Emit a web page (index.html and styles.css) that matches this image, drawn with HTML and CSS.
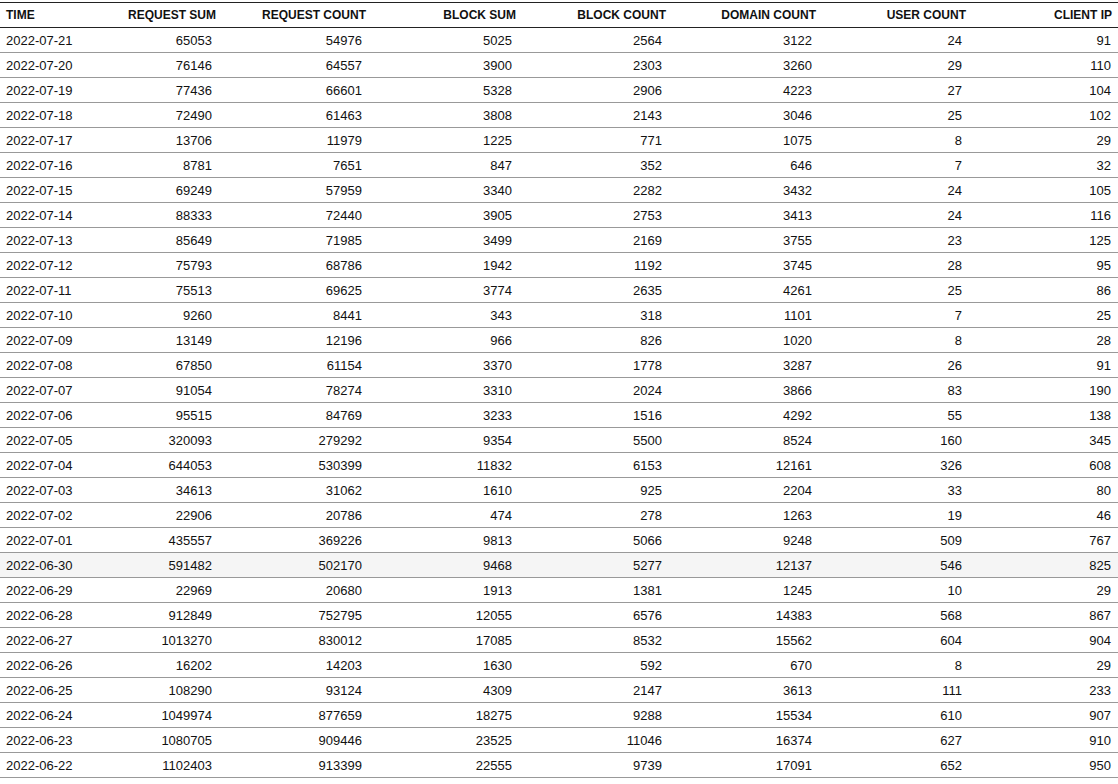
FILE: index.html
```html
<!DOCTYPE html>
<html>
<head>
<meta charset="utf-8">
<link rel="stylesheet" href="styles.css">
</head>
<body>
<table class="grid">
<colgroup><col class="c-time"><col class="c-num"><col class="c-num"><col class="c-num"><col class="c-num"><col class="c-num"><col class="c-num"><col class="c-last"></colgroup>
<thead>
<tr><th class="l">TIME</th><th>REQUEST SUM</th><th>REQUEST COUNT</th><th>BLOCK SUM</th><th>BLOCK COUNT</th><th>DOMAIN COUNT</th><th>USER COUNT</th><th class="last">CLIENT IP</th></tr>
</thead>
<tbody>
<tr><td class="l">2022-07-21</td><td>65053</td><td>54976</td><td>5025</td><td>2564</td><td>3122</td><td>24</td><td class="last">91</td></tr>
<tr><td class="l">2022-07-20</td><td>76146</td><td>64557</td><td>3900</td><td>2303</td><td>3260</td><td>29</td><td class="last">110</td></tr>
<tr><td class="l">2022-07-19</td><td>77436</td><td>66601</td><td>5328</td><td>2906</td><td>4223</td><td>27</td><td class="last">104</td></tr>
<tr><td class="l">2022-07-18</td><td>72490</td><td>61463</td><td>3808</td><td>2143</td><td>3046</td><td>25</td><td class="last">102</td></tr>
<tr><td class="l">2022-07-17</td><td>13706</td><td>11979</td><td>1225</td><td>771</td><td>1075</td><td>8</td><td class="last">29</td></tr>
<tr><td class="l">2022-07-16</td><td>8781</td><td>7651</td><td>847</td><td>352</td><td>646</td><td>7</td><td class="last">32</td></tr>
<tr><td class="l">2022-07-15</td><td>69249</td><td>57959</td><td>3340</td><td>2282</td><td>3432</td><td>24</td><td class="last">105</td></tr>
<tr><td class="l">2022-07-14</td><td>88333</td><td>72440</td><td>3905</td><td>2753</td><td>3413</td><td>24</td><td class="last">116</td></tr>
<tr><td class="l">2022-07-13</td><td>85649</td><td>71985</td><td>3499</td><td>2169</td><td>3755</td><td>23</td><td class="last">125</td></tr>
<tr><td class="l">2022-07-12</td><td>75793</td><td>68786</td><td>1942</td><td>1192</td><td>3745</td><td>28</td><td class="last">95</td></tr>
<tr><td class="l">2022-07-11</td><td>75513</td><td>69625</td><td>3774</td><td>2635</td><td>4261</td><td>25</td><td class="last">86</td></tr>
<tr><td class="l">2022-07-10</td><td>9260</td><td>8441</td><td>343</td><td>318</td><td>1101</td><td>7</td><td class="last">25</td></tr>
<tr><td class="l">2022-07-09</td><td>13149</td><td>12196</td><td>966</td><td>826</td><td>1020</td><td>8</td><td class="last">28</td></tr>
<tr><td class="l">2022-07-08</td><td>67850</td><td>61154</td><td>3370</td><td>1778</td><td>3287</td><td>26</td><td class="last">91</td></tr>
<tr><td class="l">2022-07-07</td><td>91054</td><td>78274</td><td>3310</td><td>2024</td><td>3866</td><td>83</td><td class="last">190</td></tr>
<tr><td class="l">2022-07-06</td><td>95515</td><td>84769</td><td>3233</td><td>1516</td><td>4292</td><td>55</td><td class="last">138</td></tr>
<tr><td class="l">2022-07-05</td><td>320093</td><td>279292</td><td>9354</td><td>5500</td><td>8524</td><td>160</td><td class="last">345</td></tr>
<tr><td class="l">2022-07-04</td><td>644053</td><td>530399</td><td>11832</td><td>6153</td><td>12161</td><td>326</td><td class="last">608</td></tr>
<tr><td class="l">2022-07-03</td><td>34613</td><td>31062</td><td>1610</td><td>925</td><td>2204</td><td>33</td><td class="last">80</td></tr>
<tr><td class="l">2022-07-02</td><td>22906</td><td>20786</td><td>474</td><td>278</td><td>1263</td><td>19</td><td class="last">46</td></tr>
<tr><td class="l">2022-07-01</td><td>435557</td><td>369226</td><td>9813</td><td>5066</td><td>9248</td><td>509</td><td class="last">767</td></tr>
<tr class="hover"><td class="l">2022-06-30</td><td>591482</td><td>502170</td><td>9468</td><td>5277</td><td>12137</td><td>546</td><td class="last">825</td></tr>
<tr><td class="l">2022-06-29</td><td>22969</td><td>20680</td><td>1913</td><td>1381</td><td>1245</td><td>10</td><td class="last">29</td></tr>
<tr><td class="l">2022-06-28</td><td>912849</td><td>752795</td><td>12055</td><td>6576</td><td>14383</td><td>568</td><td class="last">867</td></tr>
<tr><td class="l">2022-06-27</td><td>1013270</td><td>830012</td><td>17085</td><td>8532</td><td>15562</td><td>604</td><td class="last">904</td></tr>
<tr><td class="l">2022-06-26</td><td>16202</td><td>14203</td><td>1630</td><td>592</td><td>670</td><td>8</td><td class="last">29</td></tr>
<tr><td class="l">2022-06-25</td><td>108290</td><td>93124</td><td>4309</td><td>2147</td><td>3613</td><td>111</td><td class="last">233</td></tr>
<tr><td class="l">2022-06-24</td><td>1049974</td><td>877659</td><td>18275</td><td>9288</td><td>15534</td><td>610</td><td class="last">907</td></tr>
<tr><td class="l">2022-06-23</td><td>1080705</td><td>909446</td><td>23525</td><td>11046</td><td>16374</td><td>627</td><td class="last">910</td></tr>
<tr><td class="l">2022-06-22</td><td>1102403</td><td>913399</td><td>22555</td><td>9739</td><td>17091</td><td>652</td><td class="last">950</td></tr>
</tbody>
</table>
</body>
</html>
```
FILE: styles.css
```css
html, body {
  margin: 0;
  padding: 0;
  background: #fff;
}
body {
  padding-top: 2px;
  font-family: "Liberation Sans", Arial, sans-serif;
  color: #111;
}
.grid {
  width: 1118px;
  border-collapse: collapse;
  table-layout: fixed;
}
.c-time { width: 70px; }
.c-num { width: 150px; }
.c-last { width: 148px; }
.grid th {
  font-size: 12px;
  font-weight: bold;
  text-align: right;
  height: 24px;
  padding: 0 4px 0 6px;
  border-top: 1px solid #222;
  border-bottom: 1px solid #222;
  white-space: nowrap;
  color: #111;
}
.grid td {
  font-size: 13px;
  text-align: right;
  height: 24px;
  padding: 0 8px 0 6px;
  border-bottom: 1px solid #999;
  white-space: nowrap;
}
.grid .l {
  text-align: left;
  padding-left: 6px;
}
.grid th.last { padding-right: 6px; }
.grid td.last { padding-right: 7px; }
.grid tr.hover td { background: #f5f5f5; }
```
